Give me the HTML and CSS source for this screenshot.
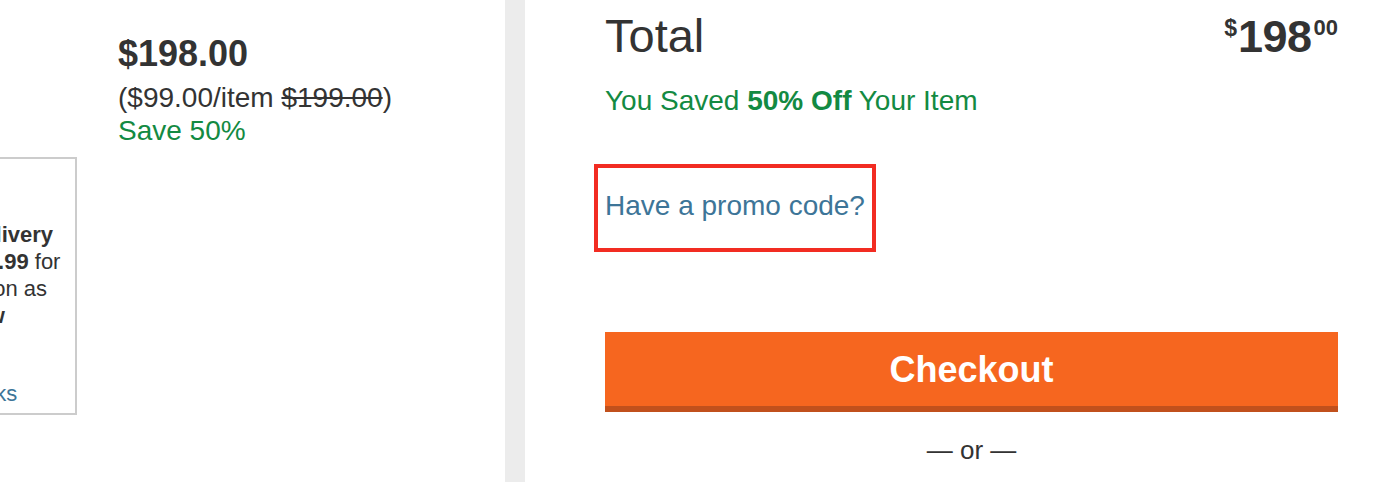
FILE: index.html
```html
<!DOCTYPE html>
<html lang="en">
<head>
<meta charset="utf-8">
<title>Cart summary</title>
<link rel="stylesheet" href="styles.css">
</head>
<body>
<div class="page">
  <section class="item-col">
    <div class="delivery-box">
      <div class="dl-line"><b>Direct Delivery</b></div>
      <div class="dl-line">Costs <b>$79.99</b> for</div>
      <div class="dl-line">Get as soon as</div>
      <div class="dl-line"><b>Tomorrow</b></div>
      <div class="dl-line dl-link-line"><a class="link" href="#">View Trucks</a></div>
    </div>
    <div class="item-price">
      <div class="price-main">$198.00</div>
      <div class="price-sub">($99.00/item <s>$199.00</s>)</div>
      <div class="price-save">Save 50%</div>
    </div>
  </section>
  <div class="divider"></div>
  <section class="summary-col">
    <div class="total-row">
      <div class="total-label">Total</div>
      <div class="total-price">
        <span class="tp-cur">$</span><span class="tp-whole">198</span><span class="tp-cents">00</span>
      </div>
    </div>
    <div class="saved">You Saved <b>50% Off</b> Your Item</div>
    <div class="promo-wrap">
      <a class="promo link" href="#">Have a promo code?</a>
    </div>
    <button class="checkout" type="button">Checkout</button>
    <div class="or">— or —</div>
  </section>
</div>
</body>
</html>
```

FILE: styles.css
```css
* {
  box-sizing: border-box;
}

html, body {
  margin: 0;
  padding: 0;
  background: #ffffff;
  overflow: hidden;
}

body {
  font-family: "Liberation Sans", Arial, Helvetica, sans-serif;
  color: #333333;
}

.page {
  display: flex;
  height: 482px;
  width: 1390px;
}

.item-col {
  width: 505px;
  flex: none;
  display: flex;
  align-items: flex-start;
  padding-top: 30px;
}

.delivery-box {
  flex: none;
  width: 196px;
  margin-left: -119px;
  margin-top: 127px;
  border: 2px solid #cccccc;
  padding: 62px 10px 6px 16px;
  font-size: 22px;
  line-height: 27px;
  white-space: nowrap;
  color: #333333;
}

.dl-line b {
  font-weight: bold;
}

.dl-link-line {
  margin-top: 51px;
}

.link {
  color: #3d7598;
  text-decoration: none;
}

.item-price {
  margin-left: 41px;
}

.price-main {
  font-size: 36px;
  font-weight: bold;
  line-height: 47px;
  margin-bottom: 4px;
}

.price-sub,
.price-save {
  font-size: 28px;
  line-height: 33px;
}

.price-save {
  color: #138a42;
}

.divider {
  width: 20px;
  flex: none;
  background: #ececec;
}

.summary-col {
  flex: 1;
  padding: 13px 52px 0 80px;
  display: flex;
  flex-direction: column;
  align-items: stretch;
}

.total-row {
  display: flex;
  justify-content: space-between;
  align-items: flex-start;
}

.total-label {
  font-size: 47px;
  line-height: 46px;
}

.total-price {
  display: flex;
  align-items: flex-start;
  font-weight: bold;
  line-height: 1;
}

.tp-cur {
  font-size: 23px;
  margin-top: 4px;
  margin-right: 1px;
}

.tp-whole {
  font-size: 45px;
  margin-top: 1px;
  letter-spacing: -0.5px;
}

.tp-cents {
  font-size: 22px;
  margin-top: 4px;
  margin-left: 2px;
}

.saved {
  margin-top: 25px;
  font-size: 28px;
  line-height: 33px;
  color: #138a42;
}

.saved b {
  font-weight: bold;
}

.promo-wrap {
  margin-top: 47px;
}

.promo {
  display: inline-block;
  margin-left: -11px;
  border: 4px solid #f22c22;
  padding: 21px 7px 26px 7px;
  font-size: 28px;
  line-height: 33px;
}

.checkout {
  margin-top: 80px;
  height: 80px;
  width: 100%;
  border: none;
  border-bottom: 6px solid #c1501c;
  background: #f6661f;
  color: #ffffff;
  font-family: "Liberation Sans", Arial, Helvetica, sans-serif;
  font-size: 36px;
  font-weight: bold;
  line-height: 72px;
  padding: 2px 0 0 0;
  cursor: pointer;
}

.or {
  margin-top: 23px;
  text-align: center;
  font-size: 26px;
  line-height: 30px;
  color: #333333;
}
```
